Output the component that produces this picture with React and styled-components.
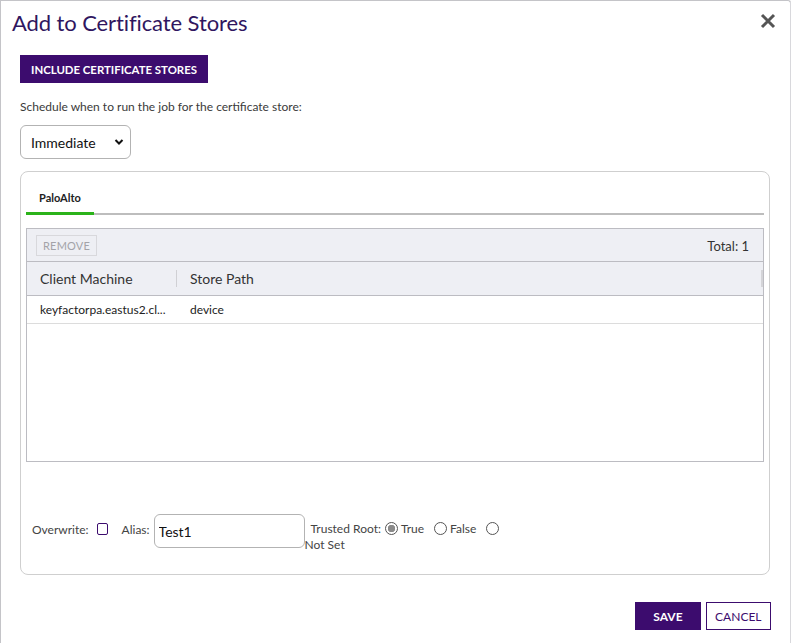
import React from "react";
import styled, { createGlobalStyle } from "styled-components";

const Global = createGlobalStyle`
  * { box-sizing: border-box; }
  html, body { margin: 0; padding: 0; background: #fff; }
  body { font-family: Lato, "Open Sans", "Liberation Sans", sans-serif; color: #333; }
`;

const PURPLE = "#3c0c6e";

const Modal = styled.div`
  width: 791px;
  height: 643px;
  border: 1px solid #c4c4c8;
  border-bottom: none;
  border-top-right-radius: 3px;
  background: #fff;
  display: flex;
  flex-direction: column;
  position: relative;
`;

const Header = styled.div`
  display: flex;
  justify-content: space-between;
  align-items: flex-start;
  padding: 9px 14px 0 11px;
  height: 44px;
  flex-shrink: 0;
`;

const Title = styled.h2`
  margin: 0;
  font-size: 22px;
  font-weight: 400;
  line-height: 26px;
  color: #2f1660;
  letter-spacing: -0.1px;
`;

const CloseButton = styled.button`
  border: none;
  background: none;
  padding: 0;
  margin-top: 3px;
  width: 16px;
  height: 16px;
  cursor: pointer;
  display: flex;
`;

const Content = styled.div`
  padding: 10px 20px 0 19px;
  flex: 1;
  display: flex;
  flex-direction: column;
`;

const PrimaryButton = styled.button`
  align-self: flex-start;
  flex-shrink: 0;
  background: ${PURPLE};
  color: #fff;
  border: 1px solid ${PURPLE};
  font-family: inherit;
  font-weight: 700;
  font-size: ${(p) => p.$size || 12}px;
  height: 28px;
  padding: 0 ${(p) => p.$pad || 10}px;
  letter-spacing: 0;
  cursor: pointer;
`;

const OutlineButton = styled(PrimaryButton)`
  background: #fff;
  color: ${PURPLE};
  font-weight: 400;
`;

const HelpText = styled.div`
  margin-top: 17px;
  font-size: 12px;
  line-height: 14px;
  color: #3a3a3a;
`;

const SelectBox = styled.div`
  margin-top: 11px;
  flex-shrink: 0;
  width: 111px;
  height: 34px;
  border: 1px solid #b3b3b3;
  border-radius: 6px;
  display: flex;
  align-items: center;
  justify-content: space-between;
  padding: 0 6px 0 10px;
  font-size: 14px;
  color: #111;
`;

const Card = styled.div`
  margin-top: 12px;
  flex-shrink: 0;
  width: 750px;
  height: 404px;
  border: 1px solid #cfcfcf;
  border-radius: 8px;
  padding: 0 5px;
  display: flex;
  flex-direction: column;
`;

const TabBar = styled.div`
  height: 43px;
  flex-shrink: 0;
  border-bottom: 2px solid #bdbdbd;
  display: flex;
  align-items: flex-end;
`;

const Tab = styled.div`
  width: 68px;
  padding: 0 0 0 13px;
  height: 100%;
  display: flex;
  align-items: center;
  padding-top: 8px;
  font-size: 11px;
  font-weight: 700;
  color: #222;
  border-bottom: 3px solid ${(p) => (p.$active ? "#2bb31a" : "transparent")};
  margin-bottom: -2px;
`;

const Grid = styled.div`
  margin-top: 13px;
  flex-shrink: 0;
  height: 234px;
  border: 1px solid #bcbcc2;
  display: flex;
  flex-direction: column;
`;

const Toolbar = styled.div`
  height: 33px;
  background: #eeeff4;
  border-bottom: 1px solid #bcbcc2;
  display: flex;
  align-items: center;
  justify-content: space-between;
  padding: 0 14px 0 9px;
`;

const GhostButton = styled.button`
  height: 21px;
  padding: 0 6px;
  background: #eeeff4;
  border: 1px solid #d8d8dc;
  font-family: inherit;
  font-size: 11px;
  color: #a3a3a8;
  letter-spacing: 0.2px;
`;

const Total = styled.span`
  font-size: 13px;
  color: #333;
  padding-top: 2px;
`;

const HeadRow = styled.div`
  height: 34px;
  background: #eeeff4;
  border-bottom: 1px solid #bcbcc2;
  display: flex;
  align-items: center;
`;

const DataRow = styled.div`
  height: 28px;
  border-bottom: 1px solid #dcdcdc;
  display: flex;
  align-items: center;
`;

const Cell = styled.div`
  width: ${(p) => p.$w}px;
  flex: ${(p) => (p.$grow ? 1 : "none")};
  padding: 0 4px 0 13px;
  font-size: ${(p) => (p.$head ? 14 : 12)}px;
  color: ${(p) => (p.$head ? "#333" : "#222")};
  white-space: nowrap;
  overflow: hidden;
  height: 16px;
  line-height: 16px;
  border-right: 1px solid ${(p) => (p.$sep ? "#d0d0d4" : "transparent")};
`;

const HeadCell = styled(Cell)`
  height: 17px;
  line-height: 17px;
`;

const HeadEnd = styled.div`
  width: 2px;
  height: 17px;
  background: #d4d4d8;
`;

const Fields = styled.div`
  margin-top: 52px;
  padding-left: 6px;
  display: flex;
  align-items: flex-start;
  font-size: 12px;
  color: #444;
`;

const InlineGroup = styled.div`
  display: flex;
  align-items: center;
  height: 16px;
  margin-top: 7px;
  margin-right: ${(p) => p.$mr || 0}px;
`;

const Label = styled.span`
  font-size: 12px;
  color: #444;
  margin-right: ${(p) => p.$mr || 0}px;
`;

const Checkbox = styled.span`
  display: inline-block;
  width: 11px;
  height: 12px;
  border: 1.5px solid ${PURPLE};
  border-radius: 2px;
`;

const TextInput = styled.input`
  width: 151px;
  height: 34px;
  border: 1px solid #b3b3b3;
  border-radius: 6px;
  padding: 0 4px;
  font-family: inherit;
  font-size: 14px;
  color: #111;
  outline: none;
`;

const TrustedGroup = styled.div`
  width: 205px;
  padding-top: 7px;
  line-height: 16px;
  font-size: 12px;
  color: #444;
`;

const TrustedLabel = styled.span`
  margin-left: 6px;
  margin-right: 4px;
`;

const Radio = styled.span`
  display: inline-block;
  vertical-align: -2px;
  width: 13px;
  height: 13px;
  border-radius: 50%;
  border: 1px solid #555;
  margin-right: 3px;
  margin-left: ${(p) => p.$ml || 0}px;
  background: ${(p) => (p.$checked ? "radial-gradient(circle, #8a8a8a 0 3.5px, #fff 4px)" : "#fff")};
`;

const Footer = styled.div`
  display: flex;
  justify-content: flex-end;
  gap: 5px;
  padding: 0 19px 13px 0;
  flex-shrink: 0;
`;

const ScrollEdge = styled.div`
  position: absolute;
  right: -1px;
  top: 0;
  bottom: 0;
  width: 1px;
  background: #d8d8dc;
`;

export default function App() {
  return (
    <>
      <Global />
      <Modal>
        <Header>
          <Title>Add to Certificate Stores</Title>
          <CloseButton aria-label="Close">
            <svg width="16" height="16" viewBox="0 0 16 16">
              <path d="M2 2 L14 14 M14 2 L2 14" stroke="#555" strokeWidth="3" strokeLinecap="butt" />
            </svg>
          </CloseButton>
        </Header>
        <Content>
          <PrimaryButton $size={11.4} $pad={10}>INCLUDE CERTIFICATE STORES</PrimaryButton>
          <HelpText>Schedule when to run the job for the certificate store:</HelpText>
          <SelectBox>
            <span>Immediate</span>
            <svg width="10" height="8" viewBox="0 0 10 8">
              <path d="M1.5 2 L5 5.5 L8.5 2" stroke="#111" strokeWidth="2" fill="none" />
            </svg>
          </SelectBox>
          <Card>
            <TabBar>
              <Tab $active>PaloAlto</Tab>
            </TabBar>
            <Grid>
              <Toolbar>
                <GhostButton disabled>REMOVE</GhostButton>
                <Total>Total: 1</Total>
              </Toolbar>
              <HeadRow>
                <HeadCell $head $w={150} $sep>Client Machine</HeadCell>
                <HeadCell $head $grow>Store Path</HeadCell>
                <HeadEnd />
              </HeadRow>
              <DataRow>
                <Cell $w={150} title="keyfactorpa.eastus2.cloudapp.azure.com">keyfactorpa.eastus2.cl...</Cell>
                <Cell $grow>device</Cell>
              </DataRow>
            </Grid>
            <Fields>
              <InlineGroup $mr={14}>
                <Label $mr={8}>Overwrite:</Label>
                <Checkbox />
              </InlineGroup>
              <InlineGroup $mr={0}>
                <Label $mr={4}>Alias:</Label>
              </InlineGroup>
              <TextInput defaultValue="Test1" />
              <TrustedGroup>
                <TrustedLabel>Trusted Root:</TrustedLabel>
                <Radio $checked />True
                <Radio $ml={10} />False
                <Radio $ml={10} /> Not Set
              </TrustedGroup>
            </Fields>
          </Card>
        </Content>
        <Footer>
          <PrimaryButton $pad={17}>SAVE</PrimaryButton>
          <OutlineButton $pad={8.5}>CANCEL</OutlineButton>
        </Footer>
        <ScrollEdge />
      </Modal>
    </>
  );
}
